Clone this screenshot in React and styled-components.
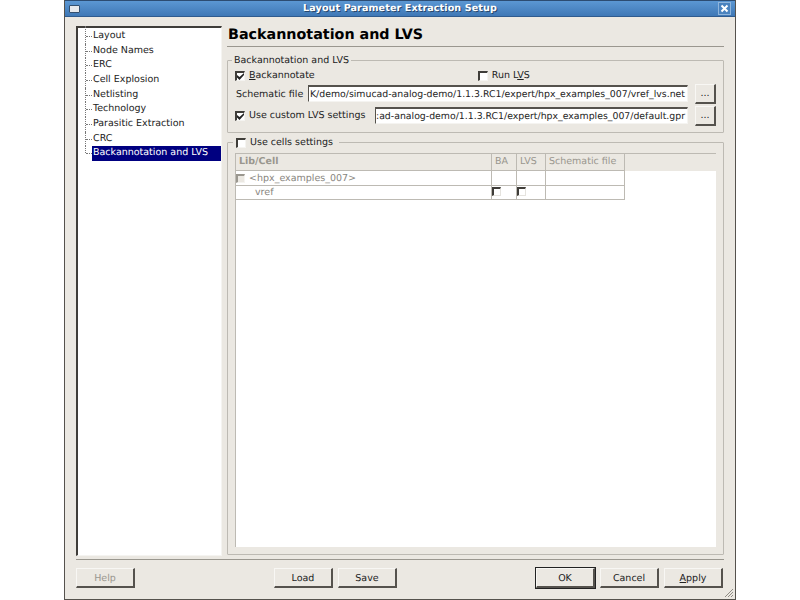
import React from "react";
import styled, { createGlobalStyle } from "styled-components";

const Global = createGlobalStyle`
  html, body { margin: 0; padding: 0; background: #fff; }
  body { font-family: "DejaVu Sans", sans-serif; font-size: 9.5px; color: #222; text-rendering: geometricPrecision; }
  * { box-sizing: border-box; }
`;
const Page = styled.div`
  width: 800px; height: 600px; display: flex; justify-content: center; overflow: hidden;
`;
const Window = styled.div`
  width: 672px; height: 600px; background: #ebe8e2; display: flex; flex-direction: column;
  border: 1px solid #55524d; border-top: none; position: relative;
`;
const TitleBar = styled.div`
  height: 17px; flex: none; display: flex; align-items: center; justify-content: space-between;
  padding: 0 3px; background: linear-gradient(#5b97d3, #3f78b6); border-top: 1px solid #2c4c72;
  border-bottom: 1px solid #2f5b8e;
`;
const WinMenu = styled.div`
  width: 11px; height: 8px; background: #e6e8ec; border: 1px solid #33506f; border-radius: 1px;
  margin-left: 1px;
`;
const TitleText = styled.div`
  color: #fff; font-weight: bold; font-size: 9.6px; letter-spacing: 0.1px; text-shadow: 1px 1px 0 #28476c;
  padding-left: 2px;
`;
const CloseBtn = styled.div`
  width: 13px; height: 13px; display: flex; align-items: center; justify-content: center;
  border: 1px solid #8fb5dc; background: #4a83bf; margin-right: 1px;
`;
const Body = styled.div`
  flex: 1; display: flex; flex-direction: column; padding: 9px 11px 11px 11px; min-height: 0;
`;
const Main = styled.div`
  flex: 1; display: flex; gap: 5px; min-height: 0;
`;
const Tree = styled.div`
  width: 146px; flex: none; background: #fff; padding: 1px 0 0 7px; height: 530px;
  border-top: 2px solid #3f3d39; border-left: 2px solid #3f3d39;
  border-right: 1px solid #f5f4f1; border-bottom: 1px solid #f5f4f1;
`;
const TreeItem = styled.div`
  height: 14.67px; line-height: 14.67px; position: relative; padding-left: 7px; white-space: nowrap;
  color: ${p => (p.$selected ? "#fff" : "#222")};
  &::before {
    content: ""; position: absolute; left: 0; top: ${p => (p.$first ? "-3px" : "0")};
    height: ${p => (p.$last ? "7px" : p.$first ? "17.67px" : "100%")};
    border-left: 1px dotted #777;
  }
  &::after {
    content: ""; position: absolute; left: 1px; width: 6px; top: 7px; border-top: 1px dotted #777;
  }
`;
const TreeLabel = styled.span`
  display: block; padding-left: 1px;
  background: ${p => (p.$selected ? "#000080" : "transparent")};
`;
const Right = styled.div`
  flex: 1; min-width: 0; display: flex; flex-direction: column;
`;
const Heading = styled.div`
  font-size: 14.3px; font-weight: bold; color: #000; height: 21px; line-height: 18px; padding-left: 1px;
  border-bottom: 1px solid #9a978f; flex: none; margin-bottom: 13px;
`;
const Group = styled.div`
  border: 1px solid #bdbab3; border-radius: 1px; position: relative; display: flex; flex-direction: column;
`;
const Backann = styled(Group)`
  height: 73px; flex: none; padding: 7px 7px 0 7px; margin-bottom: 9px;
`;
const Cells = styled(Group)`
  height: 413px; flex: none; padding: 10px 7px 7px 7px;
`;
const Legend = styled.div`
  position: absolute; top: -6px; left: 4px; background: #ebe8e2; padding: 0 2px; height: 12px; line-height: 12px;
  display: flex; align-items: center; gap: 4px;
`;
const CellsLegend = styled(Legend)`
  top: -7px; left: 5px; padding: 0 6px 0 3px; height: 13px;
`;
const Row = styled.div`
  display: flex; align-items: center; height: 15px;
`;
const Box = styled.span`
  width: 10px; height: 10px; flex: none; background: #fff; display: inline-flex;
  border-top: 2px solid #3f3d39; border-left: 2px solid #3f3d39;
  border-right: 1px solid #f5f4f1; border-bottom: 1px solid #f5f4f1;
  ${p => p.$dim && "width:9px; height:9px; background:#ebe8e2; border-color:#9a978f #f5f4f1 #f5f4f1 #9a978f;"}
`;
const Check = ({ checked, dim }) => (
  <Box $dim={dim}>
    {checked && (
      <svg width="7" height="7" viewBox="0 0 7 7" style={{ display: "block" }}>
        <path d="M0 2 L2.5 4 L7 0 L7 2 L2.5 7 L0 4.5 Z" fill="#222" />
      </svg>
    )}
  </Box>
);
const CheckLabel = styled.span`
  margin-left: 4px; white-space: nowrap;
`;
const CheckA = styled(Row)`
  margin-bottom: 1px;
`;
const RunLvs = styled.div`
  display: flex; align-items: center; margin-left: 163px;
`;
const FieldRow = styled.div`
  display: flex; align-items: flex-start; height: 21px; margin-bottom: 1px;
`;
const FieldLabel = styled.span`
  white-space: nowrap; width: 73px; flex: none; padding-left: 1px; line-height: 21px;
`;
const FieldLabel2 = styled.div`
  display: flex; align-items: center; width: 140px; flex: none; white-space: nowrap; height: 19px;
`;
const Input = styled.div`
  height: 17px; margin-top: 1px; flex: 1; min-width: 0; background: #fff; overflow: hidden; white-space: nowrap;
  line-height: 15px; font-size: 9.35px;
  border-top: 2px solid #55524d; border-left: 1px solid #55524d; border-right: 1px solid #f5f4f1;
  border-bottom: 1px solid #f5f4f1; margin-right: 2px; direction: rtl; text-align: left; padding: 0 2px 0 1px;
`;
const LtrText = styled.bdi`
  direction: ltr; unicode-bidi: isolate;
`;
const Btn = styled.div`
  display: flex; align-items: center; justify-content: center; flex: none; height: 20px;
  background: #ebe8e2; color: ${p => (p.$disabled ? "#9a978f" : "#222")};
  border-top: 1px solid #f8f7f4; border-left: 1px solid #f8f7f4;
  border-right: 2px solid #55524d; border-bottom: 2px solid #55524d;
  ${p => p.$def && "outline: 1px solid #222;"}
`;
const DotsBtn = styled(Btn)`
  width: 21px; height: 20px; margin-left: 5px;
`;
const Table = styled.div`
  flex: 1; background: #fff; border-top: 1px solid #bdbab3; border-left: 1px solid #bdbab3;
  display: flex; flex-direction: column; min-height: 0;
`;
const HeaderWrap = styled.div`
  background: #ebe8e2; height: 17px; flex: none;
`;
const Grid = styled.div`
  display: grid; grid-template-columns: 256px 25px 29px 79px; width: 389px;
`;
const HCell = styled.div`
  height: 17px; line-height: 16px; padding-left: ${p => p.$pad || 3}px; border-right: 1px solid #bdbab3;
  border-bottom: 1px solid #bdbab3; color: #99968e; font-weight: ${p => (p.$bold ? "bold" : "normal")};
  white-space: nowrap;
`;
const Cell = styled.div`
  height: ${p => p.$h || 15}px; border-right: 1px solid #bdbab3; border-bottom: 1px solid #bdbab3;
  display: flex; align-items: center; color: #88857e; padding-left: ${p => p.$pad || 0}px;
  white-space: nowrap;
`;
const FirstLabel = styled.span`
  margin-left: 4px;
`;
const CellCheck = styled.span`
  width: 9px; height: 9px; display: block; border-top: 2px solid #3f3d39; border-left: 2px solid #3f3d39;
  border-right: 1px solid #e5e3de; border-bottom: 1px solid #e5e3de; margin-bottom: 3px;
`;
const Separator = styled.div`
  flex: none; height: 1px; background: #9a978f; margin: 4px 0 8px 0;
`;
const Footer = styled.div`
  display: flex; align-items: center; height: 20px; flex: none;
`;
const FootBtn = styled(Btn)`
  width: 59px; margin-left: ${p => p.$ml || 0}px; padding-top: 1px;
`;
const U = styled.span`
  text-decoration: underline;
`;
const Grip = styled.svg`
  position: absolute; right: 1px; bottom: 1px;
`;

export default function App() {
  const items = ["Layout","Node Names","ERC","Cell Explosion","Netlisting","Technology","Parasitic Extraction","CRC","Backannotation and LVS"];
  return (
    <Page>
      <Global />
      <Window>
        <TitleBar>
          <WinMenu />
          <TitleText>Layout Parameter Extraction Setup</TitleText>
          <CloseBtn>
            <svg width="9" height="9" viewBox="0 0 9 9">
              <path d="M1.5 1.5 L7.5 7.5 M7.5 1.5 L1.5 7.5" stroke="#fff" strokeWidth="2" />
            </svg>
          </CloseBtn>
        </TitleBar>
        <Body>
          <Main>
            <Tree>
              {items.map((t, i) => (
                <TreeItem key={t} $first={i === 0} $last={i === items.length - 1} $selected={i === 8}>
                  <TreeLabel $selected={i === 8}>{t}</TreeLabel>
                </TreeItem>
              ))}
            </Tree>
            <Right>
              <Heading>Backannotation and LVS</Heading>
              <Backann>
                <Legend>Backannotation and LVS</Legend>
                <CheckA>
                  <Check checked />
                  <CheckLabel><U>B</U>ackannotate</CheckLabel>
                  <RunLvs>
                    <Check />
                    <CheckLabel>Run L<U>V</U>S</CheckLabel>
                  </RunLvs>
                </CheckA>
                <FieldRow>
                  <FieldLabel>Schematic file</FieldLabel>
                  <Input><LtrText>K/demo/simucad-analog-demo/1.1.3.RC1/expert/hpx_examples_007/vref_lvs.net</LtrText></Input>
                  <DotsBtn>...</DotsBtn>
                </FieldRow>
                <FieldRow>
                  <FieldLabel2>
                    <Check checked />
                    <CheckLabel>Use custom LVS settings</CheckLabel>
                  </FieldLabel2>
                  <Input><LtrText>:ad-analog-demo/1.1.3.RC1/expert/hpx_examples_007/default.gpr</LtrText></Input>
                  <DotsBtn>...</DotsBtn>
                </FieldRow>
              </Backann>
              <Cells>
                <CellsLegend>
                  <Check />
                  <span>Use cells settings</span>
                </CellsLegend>
                <Table>
                  <HeaderWrap>
                    <Grid>
                      <HCell $bold>Lib/Cell</HCell>
                      <HCell>BA</HCell>
                      <HCell>LVS</HCell>
                      <HCell>Schematic file</HCell>
                    </Grid>
                  </HeaderWrap>
                  <Grid>
                    <Cell><Check dim /><FirstLabel>&lt;hpx_examples_007&gt;</FirstLabel></Cell>
                    <Cell />
                    <Cell />
                    <Cell />
                    <Cell $pad={19} $h={14}>vref</Cell>
                    <Cell $h={14}><CellCheck /></Cell>
                    <Cell $h={14}><CellCheck /></Cell>
                    <Cell $h={14} />
                  </Grid>
                </Table>
              </Cells>
            </Right>
          </Main>
          <Separator />
          <Footer>
            <FootBtn $disabled>Help</FootBtn>
            <FootBtn $ml={139}>Load</FootBtn>
            <FootBtn $ml={5}>Save</FootBtn>
            <FootBtn $ml={139} $def>OK</FootBtn>
            <FootBtn $ml={5}>Cancel</FootBtn>
            <FootBtn $ml={5}><span><U>A</U>pply</span></FootBtn>
          </Footer>
        </Body>
        <Grip width="11" height="11" viewBox="0 0 11 11">
          <path d="M10 2 L2 10 M10 5 L5 10 M10 8 L8 10" stroke="#8f8c85" strokeWidth="1" />
        </Grip>
      </Window>
    </Page>
  );
}
